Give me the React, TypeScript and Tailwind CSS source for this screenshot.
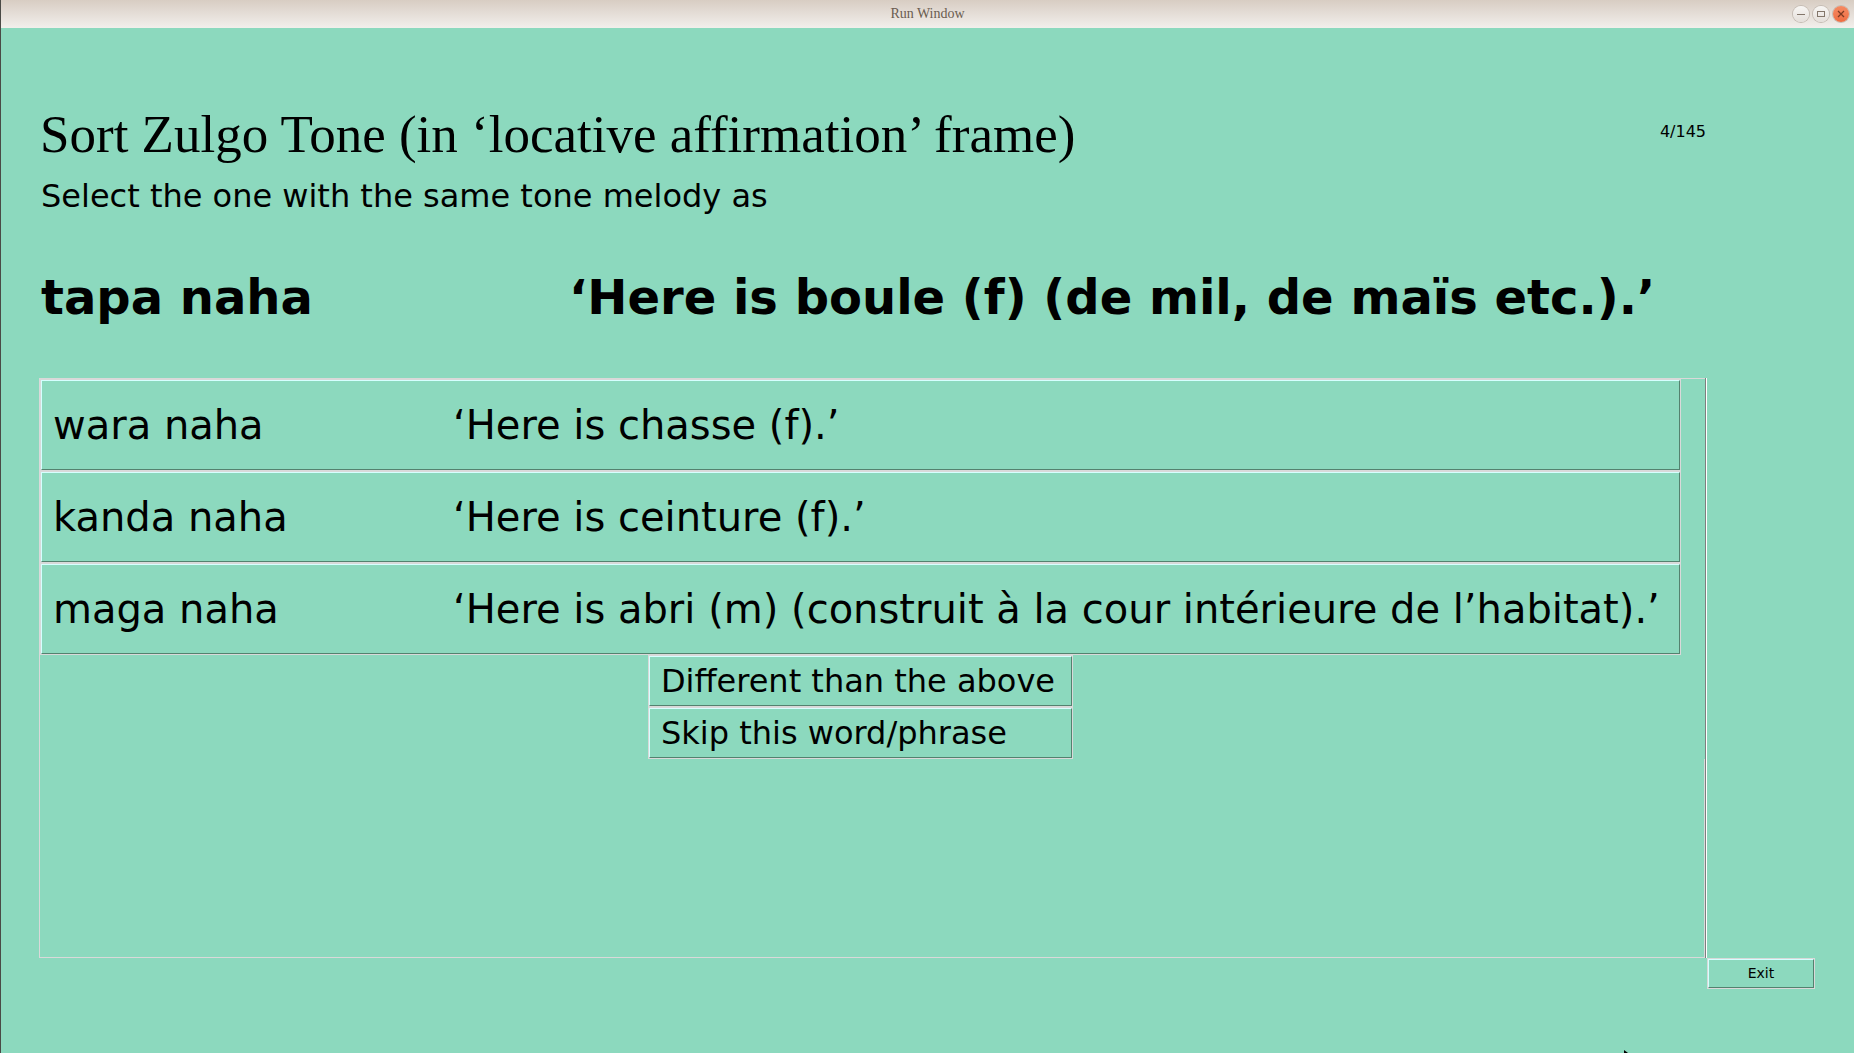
import { ReactNode } from "react";

const choices = [
    { form: "wara naha", gloss: "‘Here is chasse (f).’" },
    { form: "kanda naha", gloss: "‘Here is ceinture (f).’" },
    { form: "maga naha", gloss: "‘Here is abri (m) (construit à la cour intérieure de l’habitat).’" },
];

const actions = ["Different than the above", "Skip this word/phrase"];

// light focus ring outside, raised bevel inside
function RaisedButton({ className = "", children }: { className?: string; children: ReactNode }) {
    return (
        <button type="button" className="flex border border-[#d9d9d9] text-left">
            <span
                className={`flex-1 border border-t-[#d6ffff] border-r-[#54826f] border-b-[#54826f] border-l-[#d6ffff] whitespace-nowrap ${className}`}
            >
                {children}
            </span>
        </button>
    );
}

function WindowButton({ label, close, children }: { label: string; close?: boolean; children: ReactNode }) {
    return (
        <button
            type="button"
            aria-label={label}
            className={`size-4 rounded-full ring-1 ring-[#c4bbb3] ${close ? "bg-linear-to-b from-[#f58a62] to-[#ee6c40] text-[#7d3a22]" : "bg-linear-to-b from-[#f8f6f4] to-[#e4dfda] text-[#83766a]"}`}
        >
            <svg viewBox="0 0 16 16" className="size-4" fill="none" stroke="currentColor" shapeRendering="crispEdges">
                {children}
            </svg>
        </button>
    );
}

function TitleBar() {
    return (
        <header className="grid h-7 grid-cols-[1fr_auto_1fr] items-center bg-linear-to-b from-[#d8cdc3] to-[#f2efec]">
            <span className="col-start-2 font-['Liberation_Serif',serif] text-sm leading-6 text-[#6a5c50]">Run Window</span>
            <div className="flex justify-end gap-1 pr-[5px]">
                <WindowButton label="Minimize">
                    <path d="M4 8.5h8" />
                </WindowButton>
                <WindowButton label="Maximize">
                    <path d="M4.5 5.5h7v5h-7z" />
                </WindowButton>
                <WindowButton label="Close" close>
                    <path d="M5 5l6 6M11 5l-6 6" strokeWidth="1.3" shapeRendering="auto" />
                </WindowButton>
            </div>
        </header>
    );
}

export default function App() {
    return (
        <div className="relative flex min-h-screen flex-col overflow-hidden border-l border-[#4a4a46] bg-[#8cd9be] font-['DejaVu_Sans',sans-serif] text-black">
            <TitleBar />
            <main className="grid flex-1 grid-cols-[1fr_108px] grid-rows-[auto_1fr_auto] pt-[78px] pr-[39px] pb-16 pl-[38px]">
                <section className="pb-[53px]">
                    <div className="flex items-center justify-between pr-px pl-px">
                        <h1 className="font-['Liberation_Serif',serif] text-[53px] leading-[56px] whitespace-nowrap">
                            Sort Zulgo Tone (in ‘locative affirmation’ frame)
                        </h1>
                        <span className="pb-1 text-base">4/145</span>
                    </div>
                    <p className="mt-[14px] pl-0.5 text-[32px] leading-10">Select the one with the same tone melody as</p>
                    <h2 className="mt-[53px] flex pl-0.5 text-5xl leading-[56px] font-bold whitespace-nowrap">
                        <span className="w-[528px]">tapa naha</span>
                        <span>‘Here is boule (f) (de mil, de maïs etc.).’</span>
                    </h2>
                </section>

                <section className="col-start-1 row-start-2 flex border-r border-white">
                    <div className="flex flex-1 flex-col border-y border-l border-[#d9d9d9]">
                        <div className="flex flex-col pr-6">
                            {choices.map((c) => (
                                <RaisedButton key={c.form} className="flex h-[90px] items-center pl-[11px] text-[40px]">
                                    <span className="w-[400px]">{c.form}</span>
                                    <span>{c.gloss}</span>
                                </RaisedButton>
                            ))}
                            <div className="flex flex-col self-center">
                                {actions.map((a) => (
                                    <RaisedButton key={a} className="h-[50px] pr-4 pl-[11px] text-[32px] leading-[48px]">
                                        {a}
                                    </RaisedButton>
                                ))}
                            </div>
                        </div>
                        <div className="flex-1 border-r border-[#d9d9d9]" />
                    </div>
                    <div className="w-px bg-[#7f7f7f]" />
                </section>

                <div className="col-start-2 row-start-3 flex flex-col">
                    <RaisedButton className="text-center text-sm leading-[27px]">Exit</RaisedButton>
                </div>
            </main>
            {/* pointer resting at the bottom edge */}
            <svg className="absolute bottom-0 left-[1623px] h-[3px] w-3" viewBox="0 0 12 3" aria-hidden="true">
                <path d="M0 0l4 3H0z" fill="#000" />
            </svg>
        </div>
    );
}
